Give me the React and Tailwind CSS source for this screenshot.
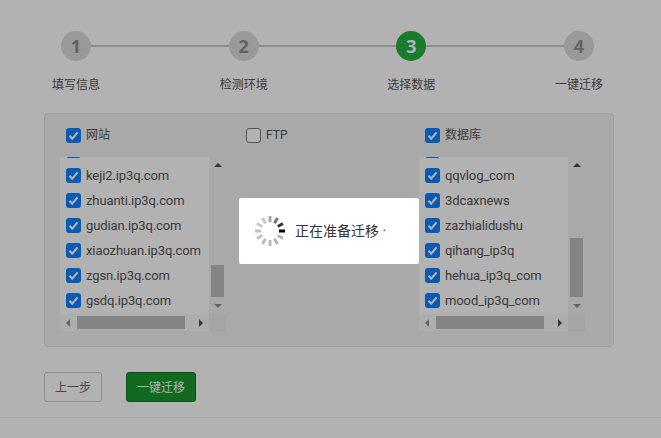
import React from "react";

const steps = [
  { no: 1, label: "填写信息" },
  { no: 2, label: "检测环境" },
  { no: 3, label: "选择数据", active: true },
  { no: 4, label: "一键迁移" },
];

const sites = ["keji2.ip3q.com", "zhuanti.ip3q.com", "gudian.ip3q.com", "xiaozhuan.ip3q.com", "zgsn.ip3q.com", "gsdq.ip3q.com"];
const databases = ["qqvlog_com", "3dcaxnews", "zazhialidushu", "qihang_ip3q", "hehua_ip3q_com", "mood_ip3q_com"];

const Check = ({ checked = true }) => (
  <span
    className={`flex h-[15px] w-[15px] shrink-0 items-center justify-center rounded-[3px] ${
      checked ? "bg-[#0d82ff]" : "border border-[#777] bg-white"
    }`}
  >
    {checked && (
      <svg width="11" height="11" viewBox="0 0 11 11" fill="none">
        <path d="M1.5 5.8 L4.2 8.6 L9.6 2.4" stroke="#fff" strokeWidth="2.2" />
      </svg>
    )}
  </span>
);

const Arrow = ({ dir, dark }) => {
  const points = {
    up: "4,0 8,4 0,4",
    down: "0,0 8,0 4,4",
    left: "4,0 4,8 0,4",
    right: "0,0 4,4 0,8",
  }[dir];
  const wide = dir === "up" || dir === "down";
  return (
    <svg width={wide ? 8 : 4} height={wide ? 4 : 8} className="shrink-0">
      <polygon points={points} fill={dark ? "#505050" : "#8f8f8f"} />
    </svg>
  );
};

const ListBox = ({ items, vTop, vHeight, hLeft }) => (
  <div className="grid h-[174px] w-[166px] grid-cols-[149px_17px] grid-rows-[157px_17px]">
    <div className="overflow-hidden bg-white">
      <div className="mt-[-19px] pl-[6px]">
        <div className="flex h-[25px] items-center">
          <Check />
        </div>
        {items.map((name) => (
          <div key={name} className="flex h-[25px] items-center gap-[5px] whitespace-nowrap text-[13px] tracking-[-0.1px] text-[#555]">
            <Check />
            <span>{name}</span>
          </div>
        ))}
      </div>
    </div>
    <div className="relative flex flex-col items-center justify-between py-[6px]">
      <Arrow dir="up" dark />
      <Arrow dir="down" />
      <div className="absolute left-[2px] w-[13px] bg-[#bdbdbd]" style={{ top: vTop, height: vHeight }} />
    </div>
    <div className="relative flex items-center justify-between bg-[#f8f8f8] px-[6px]">
      <Arrow dir="left" />
      <Arrow dir="right" dark />
      <div className="absolute top-[2px] h-[13px] w-[108px] bg-[#bdbdbd]" style={{ left: hLeft }} />
    </div>
    <div className="bg-[#ececec]" />
  </div>
);

const Spinner = () => (
  <svg width="32" height="32" viewBox="0 0 32 32" className="shrink-0">
    {["#000", "#b5b5b5", "#b5b5b5", "#bbb", "#bbb", "#c2c2c2", "#c2c2c2", "#c8c8c8", "#c8c8c8", "#a8a8a8", "#777", "#333"].map((color, i) => (
      <line key={i} x1="25" y1="16" x2="31" y2="16" stroke={color} strokeWidth="3" transform={`rotate(${i * 30} 16 16)`} />
    ))}
  </svg>
);

export default function App() {
  return (
    <div className="relative h-[438px] w-[661px] overflow-hidden bg-white font-['Roboto','Noto_Sans_CJK_SC',sans-serif]">
      {/* Stepper */}
      <div className="flex items-center pl-[61px] pr-[67px] pt-[31px]">
        {steps.map((s, i) => (
          <React.Fragment key={s.no}>
            <div
              className={`flex h-[30px] w-[30px] shrink-0 items-center justify-center rounded-full font-['Noto_Sans',sans-serif] text-[18px] font-bold ${
                s.active ? "bg-[#25b040] text-white" : "bg-[#dcdcdc] text-[#8f8f8f]"
              }`}
            >
              {s.no}
            </div>
            {i < steps.length - 1 && <div className="h-[2px] flex-1 bg-[#ccc]" />}
          </React.Fragment>
        ))}
      </div>
      <div className="mt-[15px] flex justify-between pl-[52px] pr-[58px] text-[12px] leading-[18px] text-[#555]">
        {steps.map((s) => (
          <span key={s.no}>{s.label}</span>
        ))}
      </div>

      {/* Data panel */}
      <div className="ml-[44px] mt-[19px] h-[234px] w-[570px] rounded-[4px] border border-[#e2e2e2] bg-[#f2f2f2] pl-[15px]">
        <div className="flex pt-[14px] text-[12px] leading-[15px] text-[#555]">
          <label className="ml-[6px] flex w-[180px] items-center gap-[5px]">
            <Check />
            网站
          </label>
          <label className="flex w-[179px] items-center gap-[5px]">
            <Check checked={false} />
            FTP
          </label>
          <label className="flex items-center gap-[5px]">
            <Check />
            数据库
          </label>
        </div>
        <div className="mt-[14px] flex">
          <ListBox items={sites} vTop={108} vHeight={32} hLeft={17} />
          <div className="w-[193px]" />
          <ListBox items={databases} vTop={81} vHeight={59} hLeft={17} />
        </div>
      </div>

      {/* Footer */}
      <div className="ml-[44px] mt-[25px] flex gap-[24px] text-[12px]">
        <button className="h-[30px] w-[58px] rounded-[3px] border border-[#ccc] pt-[2px] text-[#666]">上一步</button>
        <button className="h-[30px] w-[70px] rounded-[3px] border border-[#0f6e20] bg-[#179a2e] pt-[2px] text-white">一键迁移</button>
      </div>
      <div className="mt-[15px] h-px bg-[#eee]" />

      {/* Loading overlay */}
      <div className="absolute inset-0 bg-black/30" />
      <div className="absolute left-[239px] top-[198px] flex h-[66px] w-[180px] items-center gap-[9px] rounded-[2px] bg-white pl-[15px] text-[14px] text-[#333]">
        <Spinner />
        <span className="whitespace-nowrap">正在准备迁移 ·</span>
      </div>
    </div>
  );
}
